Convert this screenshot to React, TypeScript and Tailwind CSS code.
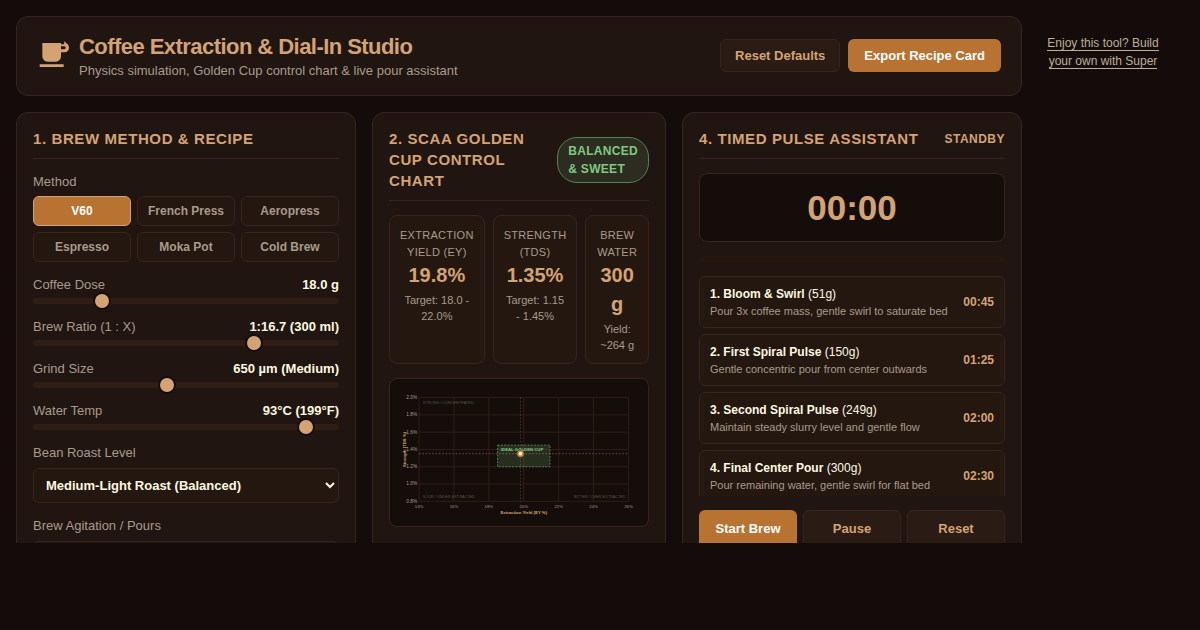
import { useState, type ReactNode } from "react";

const methods = ["V60", "French Press", "Aeropress", "Espresso", "Moka Pot", "Cold Brew"];

const sliders = [
  { id: "dose", label: "Coffee Dose", text: "18.0 g", min: 8, max: 56, step: 1, value: 18 },
  { id: "ratio", label: "Brew Ratio (1 : X)", text: "1:16.7 (300 ml)", min: 10, max: 19.1, step: 0.1, value: 16.7 },
  { id: "grind", label: "Grind Size", text: "650 µm (Medium)", min: 190, max: 1250, step: 10, value: 650 },
  { id: "temp", label: "Water Temp", text: "93°C (199°F)", min: 60, max: 96, step: 1, value: 93 },
];

const metrics = [
  { label: "Extraction Yield (EY)", value: "19.8%", note: "Target: 18.0 - 22.0%" },
  { label: "Strength (TDS)", value: "1.35%", note: "Target: 1.15 - 1.45%" },
  { label: "Brew Water", value: "300 g", note: "Yield: ~264 g" },
];

const steps = [
  { name: "1. Bloom & Swirl", grams: "(51g)", hint: "Pour 3x coffee mass, gentle swirl to saturate bed", time: "00:45" },
  { name: "2. First Spiral Pulse", grams: "(150g)", hint: "Gentle concentric pour from center outwards", time: "01:25" },
  { name: "3. Second Spiral Pulse", grams: "(249g)", hint: "Maintain steady slurry level and gentle flow", time: "02:00" },
  { name: "4. Final Center Pour", grams: "(300g)", hint: "Pour remaining water, gentle swirl for flat bed", time: "02:30" },
];

const selectClass =
  "w-full rounded-md border border-[#3a231b] bg-[#241710] px-2 py-2 text-[13px] font-bold text-[#fefae0]";

const secondaryButton =
  "rounded-md border border-[#3a231b] bg-[#2a1b15] text-[13px] font-bold text-[#d4a373]";

function Panel({ title, extra, children }: { title: string; extra?: ReactNode; children: ReactNode }) {
  return (
    <section className="flex min-w-0 flex-col gap-3.5 rounded-xl border border-[#3a231b] bg-[#201511] px-4 pt-[15px] pb-4">
      <div className="flex items-center justify-between border-b border-[#3a231b] pb-[9px]">
        <h2 className="text-[15px] leading-[21px] font-bold tracking-[0.04em] text-[#d4a373] uppercase">{title}</h2>
        {extra}
      </div>
      {children}
    </section>
  );
}

// chart space: EY 14-26% across, TDS 0.8-2.0% up
const px = (ey: number) => 40 + ((ey - 14) / 12) * 440;
const py = (tds: number) => 18 + ((2 - tds) / 1.2) * 218;

function ControlChart() {
  const xs = [14, 16, 18, 20, 22, 24, 26];
  const ys = [2.0, 1.8, 1.6, 1.4, 1.2, 1.0, 0.8];
  return (
    <svg viewBox="0 0 500 267" className="block w-full" role="img" aria-label="Golden Cup control chart">
      <g stroke="#3a231b" strokeOpacity="0.8" strokeWidth="2">
        {xs.map((x) => (
          <line key={x} x1={px(x)} x2={px(x)} y1={18} y2={236} />
        ))}
        {ys.map((y) => (
          <line key={y} x1={40} x2={480} y1={py(y)} y2={py(y)} />
        ))}
      </g>
      <rect
        x={px(18.5)}
        y={py(1.45)}
        width={px(21.5) - px(18.5)}
        height={py(1.2) - py(1.45)}
        fill="#81c784"
        fillOpacity="0.18"
        stroke="#4f8552"
        strokeWidth="2"
        strokeDasharray="4 3"
      />
      <text x="212" y="131" fontSize="9" fontWeight="bold" fill="#81c784">IDEAL GOLDEN CUP</text>
      <g fontSize="9" fill="#a89b8c" textAnchor="middle">
        {xs.map((x) => (
          <text key={x} x={px(x)} y="249">{x}%</text>
        ))}
      </g>
      <g fontSize="10" fill="#a89b8c" textAnchor="end">
        {ys.map((y) => (
          <text key={y} x="36" y={py(y) + 3}>{y.toFixed(1)}%</text>
        ))}
      </g>
      <g fontSize="8" fill="#a89b8c" fillOpacity="0.5">
        <text x="48" y="31">STRONG / CONCENTRATED</text>
        <text x="48" y="229">SOUR / UNDER-EXTRACTED</text>
        <text x="474" y="229" textAnchor="end">BITTER / OVER-EXTRACTED</text>
      </g>
      <g fontSize="9" fontWeight="bold" fill="#d4a373" textAnchor="middle">
        <text x="260" y="263">Extraction Yield (EY %)</text>
        <text transform="translate(12 127) rotate(-90)">Strength (TDS %)</text>
      </g>
      <g stroke="#d4a373" strokeOpacity="0.5" strokeWidth="2" strokeDasharray="3 4">
        <line x1="253" x2="253" y1="18" y2="236" strokeOpacity="0.3" />
        <line x1="40" x2="480" y1="136" y2="136" />
      </g>
      <circle cx="253" cy="136" r="8" fill="#b87333" fillOpacity="0.4" />
      <circle cx="253" cy="136" r="5" fill="#fff" stroke="#d98a3a" strokeWidth="3" />
    </svg>
  );
}

export default function App() {
  const [method, setMethod] = useState("V60");

  return (
    <div className="flex h-screen items-start overflow-hidden bg-[#140c0a] px-4 pt-4 pb-[87px] font-['Liberation_Sans',Arial,sans-serif] text-[#fefae0]">
      <main className="flex h-full min-w-0 flex-1 flex-col gap-4 overflow-hidden">
        <header className="flex shrink-0 items-center justify-between rounded-xl border border-[#3a231b] bg-[#201511] px-5 pt-3.5 pb-4">
          <div className="flex items-center gap-2.5">
            <svg viewBox="0 0 24 24" className="size-8 fill-[#d4a373]" aria-hidden="true">
              <path d="M4 3h14v10c0 2.2-1.8 4-4 4H8c-2.200 0-4-1.800-4-4zM2 19h18v2H2z" />
              <path d="M18 4h2.400V1.700l2.200 1.900c.9.800 1.400 1.900 1.400 3.100a3.300 3.300 0 0 1-3.300 3.300H18V7.600h2.400a1.100 1.100 0 0 0 0-2.200H18z" />
            </svg>
            <div>
              <h1 className="text-[22px] leading-[31px] font-bold tracking-tight text-[#d4a373]">
                Coffee Extraction &amp; Dial-In Studio
              </h1>
              <p className="text-[13px] leading-[17px] text-[#a89b8c]">
                Physics simulation, Golden Cup control chart &amp; live pour assistant
              </p>
            </div>
          </div>
          <div className="flex gap-2">
            <button type="button" className={`${secondaryButton} px-3.5 py-[7px] leading-[17px]`}>Reset Defaults</button>
            <button type="button" className="rounded-md bg-[#b87333] px-4 py-2 text-[13px] leading-[17px] font-bold text-white">
              Export Recipe Card
            </button>
          </div>
        </header>

        <div className="grid shrink-0 grid-cols-[340px_minmax(0,1fr)_340px] gap-4">
          <Panel title="1. Brew Method & Recipe">
            <div className="flex flex-col gap-[5px]">
              <span id="method" className="text-[13px] leading-[18px] text-[#a89b8c]">Method</span>
              <div role="group" aria-labelledby="method" className="grid grid-cols-3 gap-1.5">
                {methods.map((m) => (
                  <button
                    key={m}
                    type="button"
                    aria-pressed={m === method}
                    onClick={() => setMethod(m)}
                    className={`rounded-md border py-1.5 text-xs font-bold ${
                      m === method
                        ? "border-[#d4a373] bg-[#b87333] text-white"
                        : "border-[#3a231b] bg-[#241710] text-[#a89b8c]"
                    }`}
                  >
                    {m}
                  </button>
                ))}
              </div>
            </div>

            {sliders.map((s) => (
              <div key={s.id} className="flex flex-col gap-1">
                <div className="flex justify-between text-[13px] leading-[18px]">
                  <label htmlFor={s.id} className="text-[#a89b8c]">{s.label}</label>
                  <span className="font-bold">{s.text}</span>
                </div>
                <input
                  id={s.id}
                  type="range"
                  min={s.min}
                  max={s.max}
                  step={s.step}
                  defaultValue={s.value}
                  className="h-1.5 w-full appearance-none rounded-full bg-[#2f1d16] [&::-webkit-slider-thumb]:size-[18px] [&::-webkit-slider-thumb]:appearance-none [&::-webkit-slider-thumb]:rounded-full [&::-webkit-slider-thumb]:border-2 [&::-webkit-slider-thumb]:border-[#140d0a] [&::-webkit-slider-thumb]:bg-[#d4a373]"
                />
              </div>
            ))}

            <div className="flex flex-col gap-1.5">
              <label htmlFor="roast" className="text-[13px] leading-[18px] text-[#a89b8c]">Bean Roast Level</label>
              <select id="roast" className={selectClass}>
                <option>Medium-Light Roast (Balanced)</option>
                <option>Dark Roast (Bold)</option>
              </select>
            </div>
            <div className="flex flex-col gap-1.5">
              <label htmlFor="agitation" className="text-[13px] leading-[18px] text-[#a89b8c]">Brew Agitation / Pours</label>
              <select id="agitation" className={selectClass}>
                <option>Moderate</option>
                <option>Gentle</option>
              </select>
            </div>
          </Panel>

          <Panel
            title="2. SCAA Golden Cup Control Chart"
            extra={
              <span className="rounded-[20px] border border-[#4f8552] bg-[#2c2d20] px-2.5 py-1 text-xs leading-[18px] font-bold tracking-wide text-[#81c784] uppercase">
                Balanced &amp; Sweet
              </span>
            }
          >
            <div className="grid grid-cols-[repeat(3,1fr)] gap-2">
              {metrics.map((m) => (
                <div key={m.label} className="rounded-lg border border-[#3a231b] bg-[#241710] px-2.5 pt-[11px] pb-2.5 text-center">
                  <div className="text-[11px] leading-[17px] tracking-wide text-[#a89b8c] uppercase">{m.label}</div>
                  <div className="text-xl leading-[29px] font-bold text-[#d4a373]">{m.value}</div>
                  <div className="mt-0.5 text-[11px] leading-4 text-[#a89b8c]">{m.note}</div>
                </div>
              ))}
            </div>
            <div className="rounded-lg border border-[#3a231b] bg-[#140d0a] p-2.5">
              <ControlChart />
            </div>
          </Panel>

          <Panel
            title="4. Timed Pulse Assistant"
            extra={<span className="text-xs font-bold tracking-[0.04em] text-[#d4a373] uppercase">Standby</span>}
          >
            <div className="rounded-lg border border-[#3a231b] bg-[#140d0a] py-2 text-center text-[35px] leading-[51px] font-bold text-[#d4a373]">
              00:00
            </div>
            <div className="h-1.5 rounded-full bg-[#241710]" />
            <ol className="flex h-[220px] flex-col gap-1.5 overflow-hidden">
              {steps.map((s) => (
                <li
                  key={s.name}
                  className="flex shrink-0 items-center justify-between rounded-md border border-[#3a231b] bg-[#241710] px-2.5 py-2"
                >
                  <div>
                    <div className="text-xs leading-[18px]">
                      <strong>{s.name}</strong> {s.grams}
                    </div>
                    <div className="text-[11px] leading-4 text-[#a89b8c]">{s.hint}</div>
                  </div>
                  <span className="text-xs font-bold text-[#d4a373]">{s.time}</span>
                </li>
              ))}
            </ol>
            <div className="grid grid-cols-3 gap-1.5">
              <button type="button" className="rounded-md bg-[#b87333] py-2.5 text-[13px] leading-[18px] font-bold text-white">
                Start Brew
              </button>
              <button type="button" className={`${secondaryButton} py-[9px] leading-[18px]`}>Pause</button>
              <button type="button" className={`${secondaryButton} py-[9px] leading-[18px]`}>Reset</button>
            </div>
          </Panel>
        </div>
      </main>

      <aside className="w-[162px] shrink-0 px-4 pt-[18px] text-center text-xs leading-[18px]">
        <a href="#" className="border-b border-[#bcae97] text-[#bcae97]">
          Enjoy this tool? Build your own with Super
        </a>
      </aside>
    </div>
  );
}
